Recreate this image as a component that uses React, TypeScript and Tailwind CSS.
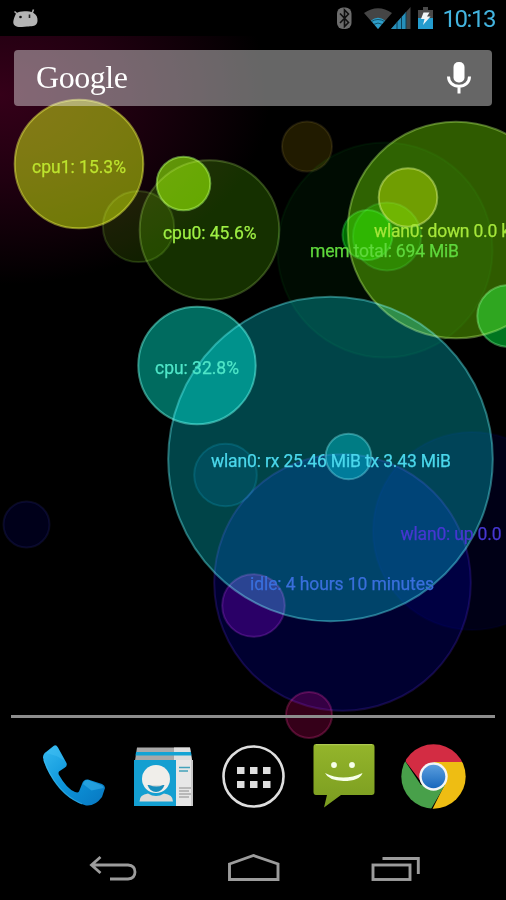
import React from 'react';

type Bubble = { cx: number; cy: number; r: number; fill: string; stroke: string };

const bubbles: Bubble[] = [
  { cx: 79, cy: 164, r: 64.3, fill: '#687a00', stroke: '#6d731e' },
  { cx: 138.5, cy: 226.5, r: 35.6, fill: '#111f00', stroke: '#1a280d' },
  { cx: 209.5, cy: 230, r: 69.8, fill: '#153000', stroke: '#2d3e1a' },
  { cx: 183.5, cy: 183.5, r: 26.8, fill: '#559400', stroke: '#4c8030' },
  { cx: 307, cy: 146.5, r: 25, fill: '#211b00', stroke: '#1b170b' },
  { cx: 385, cy: 250, r: 107.5, fill: '#000c02', stroke: '#000d03' },
  { cx: 456, cy: 230, r: 108.3, fill: '#2f5b00', stroke: '#46602a' },
  { cx: 408, cy: 197.5, r: 29.3, fill: '#506000', stroke: '#60703c' },
  { cx: 367.5, cy: 235, r: 25, fill: '#006400', stroke: '#10501a' },
  { cx: 387, cy: 236.5, r: 34, fill: '#003c00', stroke: '#082c10' },
  { cx: 508, cy: 316, r: 30.7, fill: '#007520', stroke: '#306838' },
  { cx: 197, cy: 365.5, r: 58.7, fill: '#006b5f', stroke: '#347a6e' },
  { cx: 330.5, cy: 459, r: 162.3, fill: '#004448', stroke: '#286062' },
  { cx: 225.5, cy: 475, r: 31.3, fill: '#000e1c', stroke: '#041e28' },
  { cx: 348.5, cy: 456.5, r: 22.8, fill: '#004c54', stroke: '#30585c' },
  { cx: 472, cy: 531, r: 99, fill: '#000016', stroke: '#00000e' },
  { cx: 342.5, cy: 582.5, r: 128.3, fill: '#000030', stroke: '#140a34' },
  { cx: 253.5, cy: 605.5, r: 31.3, fill: '#2a0044', stroke: '#2c1038' },
  { cx: 26.5, cy: 524.5, r: 23, fill: '#00001a', stroke: '#0a0a1e' },
  { cx: 309, cy: 715, r: 23, fill: '#350019', stroke: '#400e26' },
];

const labels = [
  { text: 'cpu1: 15.3%', x: 32, y: 172.5, w: 94, color: '#bde32e' },
  { text: 'cpu0: 45.6%', x: 163, y: 238.5, w: 93.5, color: '#9ff044' },
  { text: 'mem total: 694 MiB', x: 310, y: 257, w: 149, color: '#5fd83c' },
  { text: 'wlan0: down 0.0 k', x: 374, y: 237, w: 136, color: '#a5e63a' },
  { text: 'cpu: 32.8%', x: 155, y: 373.5, w: 84, color: '#4fe6c8' },
  { text: 'wlan0: rx 25.46 MiB tx 3.43 MiB', x: 211, y: 466.5, w: 240, color: '#4bd8ec' },
  { text: 'wlan0: up 0.0', x: 400.5, y: 539.5, w: 101, color: '#4637d2' },
  { text: 'idle: 4 hours 10 minutes', x: 250, y: 590, w: 184, color: '#396fdc' },
];

function Wallpaper() {
  return (
    <svg className="absolute inset-0 h-[900px] w-[506px]" viewBox="0 0 506 900">
      <defs>
        <radialGradient id="glow" gradientUnits="userSpaceOnUse" cx="0" cy="0" r="1" gradientTransform="translate(0 95) scale(270 190)">
          <stop offset="0" stopColor="#350019" />
          <stop offset=".45" stopColor="#200010" />
          <stop offset="1" stopColor="#000" />
        </radialGradient>
      </defs>
      <rect width="506" height="900" fill="#000" />
      <rect width="300" height="300" fill="url(#glow)" />
      {bubbles.map((b, i) => (
        <React.Fragment key={i}>
          <circle cx={b.cx} cy={b.cy} r={b.r} fill={b.fill} className="mix-blend-screen" />
          <circle cx={b.cx} cy={b.cy} r={b.r} fill="none" stroke={b.stroke} strokeWidth="2" className="mix-blend-screen" />
        </React.Fragment>
      ))}
      {labels.map((l) => (
        <text key={l.text} x={l.x} y={l.y} textLength={l.w} fill={l.color} stroke={l.color} strokeWidth=".25" className="font-['Roboto',sans-serif] text-[17.5px]">
          {l.text}
        </text>
      ))}
    </svg>
  );
}

function StatusBar() {
  return (
    <header className="flex h-9 shrink-0 items-center bg-black pl-3 pr-2">
      <svg className="h-5 w-7" viewBox="12 8 28 20">
        <path d="M14.500 11.500l3.500 3M33.500 9.500l-1.500 4" stroke="#a8a8a8" strokeWidth="1.600" />
        <path d="M16 13.500c2-1.500 5-2.200 8.500-2.200s6.500.2 9 1.700c3 1.600 4.300 4.500 4 8-.2 3-2 4.500-4.500 5-2 .5-4 .2-6 .6-3 .6-8 .8-11-.4-3.500-1.400-3-5-1.700-8.700z" fill="#b4b4b4" />
        <circle cx="20.500" cy="17" r="1.300" fill="#111" />
        <path d="M29.500 14.500v3.500" stroke="#222" strokeWidth="1.600" />
      </svg>
      <div className="flex-1" />
      <svg className="h-9 w-[102px]" viewBox="334 0 102 36">
        <rect x="337" y="7.500" width="14.500" height="21.500" rx="6" fill="#6c6c6c" />
        <path d="M340 13.500l8.500 9-4 4V10l4 4-8.500 9" fill="none" stroke="#101010" strokeWidth="1.600" />
        <path d="M364 13q14-9.500 28 0L378 29z" fill="#454545" />
        <path d="M371 20.500q7-5.500 14 0L378 29z" fill="#2d9fcb" />
        <path d="M371.500 21.500q6.500-4 13 0M374 24.300q4-2.500 8 0" fill="none" stroke="#0c4960" strokeWidth=".9" />
        <path d="M391 29L410.500 7v22z" fill="#454545" />
        <path d="M391 29L406 12v17z" fill="#268fbb" />
        <path d="M397 22v7M401.500 17v12M406 12v17" stroke="#0c4057" strokeWidth="1" />
        <path d="M423 7h5v3h5v19h-15V10h5z" fill="#4a4a4a" />
        <path d="M418 18h15v11h-15z" fill="#249cce" />
        <path d="M423.500 12.500h6l-2.500 4h3.500L423 25l1.500-6H421z" fill="#f0f5f7" />
      </svg>
      <svg className="h-9 w-[62px]" viewBox="0 0 62 36">
        <text x="6.500" y="26.500" textLength="54" className="font-['Roboto',sans-serif] text-[24px]" fill="#43b4df">10:13</text>
      </svg>
    </header>
  );
}

function SearchBar() {
  return (
    <div className="relative mx-[14px] mt-[14px] flex h-14 shrink-0 items-center justify-between rounded-sm bg-white/40 pl-[22px] pr-[19px]">
      <svg className="h-14 w-[98px]" viewBox="0 0 98 56">
        <text x="0" y="38" textLength="92" fill="#fff" className="font-['Liberation_Serif',serif] text-[32px]">Google</text>
      </svg>
      <svg className="h-9 w-7" viewBox="445 60 28 36">
        <rect x="453.500" y="62" width="11" height="20.500" rx="5" fill="#fff" />
        <path d="M448.500 76.500c0 6 4.500 9.700 10.500 9.700s10.500-3.700 10.500-9.700M459 86v7.500" fill="none" stroke="#fff" strokeWidth="3" />
      </svg>
    </div>
  );
}

function PhoneIcon() {
  return (
    <svg className="h-20 w-[72px]" viewBox="38 736 72 80">
      <defs>
        <linearGradient id="phone" x1="0" y1="0" x2="1" y2="1">
          <stop offset="0" stopColor="#35b9ef" />
          <stop offset=".5" stopColor="#0c94da" />
          <stop offset="1" stopColor="#0877c0" />
        </linearGradient>
      </defs>
      <path d="M43 757.500Q43 754 46 752l7.500-6Q56 744 58 747.500l8.500 15.500q1 3-1.500 4.500l-6 4q-1 1.500 0 3.500 8 14 16 17 3 1 4-.5l3-7.500q1.500-5 6-4.500L102 784q3 1.500 3 4l-3 9q-7 9.500-16 8.500-8-2-16-7.500-12-9-20.500-24Q44 764 43 757.500z" fill="url(#phone)" />
      <path d="M46 753l8-6.500q2-1.500 3.500 1l7 13-8-4.500zM83 784q1.500-4.500 5-4l13 5q2.500 1 2.500 3l-12 2.500z" fill="#48c3f6" opacity=".4" />
      <path d="M44 760q10 28 30 40l8 4" fill="none" stroke="#41bff1" strokeWidth="1.300" opacity=".5" />
    </svg>
  );
}

function PeopleIcon() {
  return (
    <svg className="h-20 w-[72px]" viewBox="128 736 72 80">
      <path d="M137 747.500h53l2 13h-57z" fill="#a8a8a8" />
      <path d="M174 747.500h16l2 13h-18z" fill="#dedede" />
      <path d="M136 752h55l.5 3.500h-56z" fill="#13a3d4" />
      <path d="M134 760h42v46h-42z" fill="#149fd1" />
      <path d="M176 760h17v46h-17z" fill="#e7e7e7" />
      <path d="M191 760h2v46h-2z" fill="#c8c8c8" />
      <circle cx="156" cy="779" r="14" fill="#f0eeea" />
      <path d="M139.500 801.500q0-7 8.500-8 8 5 16 0 9 1 9 8z" fill="#dedbd7" />
      <path d="M147.500 785h17q-2.500 7-8.500 7t-8.500-7z" fill="#168ebd" />
      <path d="M149 785h14q-6 3-14 0z" fill="#d5d8d7" />
      <path d="M179 767.500h11M179 771h9" stroke="#43a2bb" strokeWidth="1.500" />
      <path d="M179 788h12M179 791h10M179 794h12M179 797h10" stroke="#aaa" strokeWidth="1.700" />
    </svg>
  );
}

function AppsIcon() {
  return (
    <svg className="h-20 w-[72px]" viewBox="218 736 72 80">
      <circle cx="253.500" cy="776.500" r="30" fill="none" stroke="#dedede" strokeWidth="2.600" />
      {[237, 250, 263].map((x) => (
        <g key={x} fill="#dedede">
          <rect x={x} y="767" width="7.500" height="7" />
          <rect x={x} y="781" width="7.500" height="7" />
        </g>
      ))}
    </svg>
  );
}

function MessagingIcon() {
  return (
    <svg className="h-20 w-[72px]" viewBox="308 736 72 80">
      <defs>
        <linearGradient id="sms" x1="0" y1="0" x2="0" y2="1">
          <stop offset="0" stopColor="#94b52b" />
          <stop offset="1" stopColor="#7a9c20" />
        </linearGradient>
      </defs>
      <path d="M316 744h56q2.500 0 2.500 3v45q0 3-3 3H341l-17 12.500 3-12.500h-11q-2.500 0-2.500-3v-45q0-3 2.500-3z" fill="url(#sms)" />
      <path d="M316 744.700h56" stroke="#b4ce5a" strokeWidth="1" />
      <circle cx="334" cy="765" r="2.900" fill="#f6ffe8" />
      <circle cx="352" cy="765" r="2.900" fill="#f6ffe8" />
      <path d="M325 773q18 9 37.500 0-3 8-19 8-15-.5-18.500-8z" fill="#f6ffe8" />
    </svg>
  );
}

function ChromeIcon() {
  return (
    <svg className="h-20 w-[72px]" viewBox="398 736 72 80">
      <defs>
        <clipPath id="chrome"><circle cx="433.500" cy="776.500" r="32.200" /></clipPath>
        <linearGradient id="blue" x1="0" y1="0" x2="0" y2="1">
          <stop offset="0" stopColor="#5b9ede" />
          <stop offset="1" stopColor="#1768bd" />
        </linearGradient>
      </defs>
      <g clipPath="url(#chrome)">
        <path d="M400 740h70v22h-36l-12 21-16-21z" fill="#d32c43" />
        <path d="M433.500 762H470v50h-39l14-28z" fill="#eebd13" />
        <path d="M405 761l16 24 12.500-5L445 785l-14 24h-32v-50z" fill="#48a04a" />
      </g>
      <circle cx="433.500" cy="776.500" r="14.200" fill="#f4f6f7" />
      <circle cx="433.500" cy="776.500" r="11.800" fill="url(#blue)" />
    </svg>
  );
}

function NavigationBar() {
  return (
    <nav className="flex h-[62px] shrink-0 items-center justify-between bg-black pl-[88px] pr-[84px]">
      <svg className="h-[62px] w-[50px]" viewBox="88 838 50 62">
        <path d="M100.500 857l-9 8 9 8M92 865h36q7 .5 7 7t-7 7h-18" fill="none" stroke="#9c9c9c" strokeWidth="2.800" />
      </svg>
      <svg className="h-[62px] w-[56px]" viewBox="226 838 56 62">
        <path d="M229.500 864L253.500 855.500l24.500 8.500v15.500h-48.500z" fill="none" stroke="#9c9c9c" strokeWidth="2.900" />
      </svg>
      <svg className="h-[62px] w-[52px]" viewBox="370 838 52 62">
        <rect x="373" y="865" width="37" height="14.500" fill="none" stroke="#9c9c9c" strokeWidth="2.900" />
        <path d="M382.500 858.500h35.800V874" fill="none" stroke="#9c9c9c" strokeWidth="2.900" />
      </svg>
    </nav>
  );
}

export default function App() {
  return (
    <div className="relative h-[900px] w-[506px] overflow-hidden bg-black">
      <Wallpaper />
      <div className="relative flex h-full flex-col">
        <StatusBar />
        <SearchBar />
        <main className="flex-1" />
        <div className="mx-[11px] h-[3px] shrink-0 bg-[#8d8d8d]" />
        <div className="mt-[18px] flex h-20 shrink-0 justify-between pl-[38px] pr-9">
          <PhoneIcon />
          <PeopleIcon />
          <AppsIcon />
          <MessagingIcon />
          <ChromeIcon />
        </div>
        <div className="h-[22px] shrink-0" />
        <NavigationBar />
      </div>
    </div>
  );
}
